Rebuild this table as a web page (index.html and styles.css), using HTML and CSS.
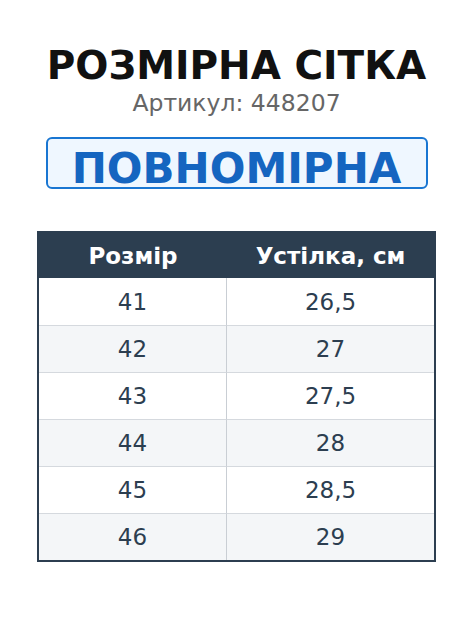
FILE: index.html
```html
<!DOCTYPE html>
<html lang="uk">
<head>
<meta charset="utf-8">
<title>Розмірна сітка</title>
<link rel="stylesheet" href="styles.css">
</head>
<body>
<main class="page">
  <h1 class="title">РОЗМІРНА СІТКА</h1>
  <p class="article">Артикул: 448207</p>
  <div class="badge">ПОВНОМІРНА</div>
  <table class="sizes">
    <thead>
      <tr><th class="col-size">Розмір</th><th class="col-insole">Устілка, см</th></tr>
    </thead>
    <tbody>
      <tr><td>41</td><td>26,5</td></tr>
      <tr><td>42</td><td>27</td></tr>
      <tr><td>43</td><td>27,5</td></tr>
      <tr><td>44</td><td>28</td></tr>
      <tr><td>45</td><td>28,5</td></tr>
      <tr><td>46</td><td>29</td></tr>
    </tbody>
  </table>
</main>
</body>
</html>
```
FILE: styles.css
```css
html, body {
  margin: 0;
  padding: 0;
  background: #ffffff;
}
body {
  font-family: "DejaVu Sans", "Noto Sans", sans-serif;
}
.page {
  display: flex;
  flex-direction: column;
  align-items: center;
  padding-top: 42px;
}
.title {
  margin: 0;
  font-size: 39px;
  line-height: 48px;
  font-weight: bold;
  color: #111111;
}
.article {
  margin: 0;
  font-size: 23.5px;
  line-height: 26px;
  color: #666666;
}
.badge {
  margin-top: 21px;
  box-sizing: border-box;
  width: 382px;
  height: 52px;
  border: 2px solid #1976d2;
  border-radius: 6px;
  background: #eff7ff;
  color: #1565c0;
  font-size: 42px;
  font-weight: bold;
  line-height: 36px;
  padding-top: 12px;
  text-align: center;
}
.sizes {
  margin-top: 42px;
  width: 399px;
  border: 2px solid #2c3e50;
  border-collapse: separate;
  border-spacing: 0;
  table-layout: fixed;
}
.sizes th {
  background: #2c3e50;
  color: #ffffff;
  font-size: 23px;
  font-weight: bold;
  height: 45px;
  padding: 0;
  text-align: center;
}
.sizes .col-size {
  width: 188px;
}
.sizes td {
  height: 46px;
  padding: 0;
  text-align: center;
  font-size: 23px;
  color: #2c3e50;
  border-top: 1px solid #d5d9de;
}
.sizes tbody tr:first-child td {
  border-top: none;
  height: 47px;
}
.sizes td:first-child {
  border-right: 1px solid #c9ced4;
}
.sizes tbody tr:nth-child(even) td {
  background: #f4f6f8;
}
```
